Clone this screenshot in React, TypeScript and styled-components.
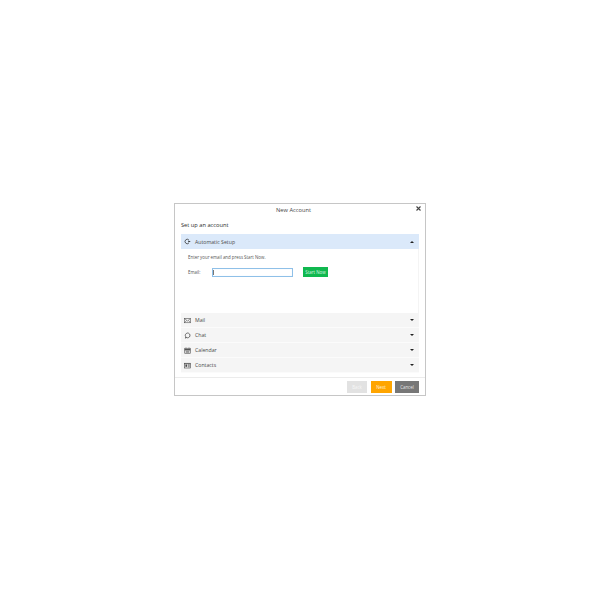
import * as React from "react";
import styled, { createGlobalStyle } from "styled-components";

const GlobalStyle = createGlobalStyle`
  html, body {
    margin: 0;
    padding: 0;
    background: #fff;
  }
  body {
    font-family: "Open Sans", "Liberation Sans", sans-serif;
    color: #333;
  }
`;

const Page = styled.div`
  width: 600px;
  height: 600px;
  box-sizing: border-box;
  padding: 203px 0 0 174px;
`;

const Dialog = styled.div`
  width: 252px;
  height: 193px;
  box-sizing: border-box;
  border: 1px solid #c6c6c6;
  background: #fff;
  display: flex;
  flex-direction: column;
`;

const TitleBar = styled.div`
  height: 11px;
  box-sizing: border-box;
  padding-right: 13px;
  position: relative;
  display: flex;
  align-items: center;
  justify-content: center;
  font-size: 5.7px;
  color: #444;
`;

const CloseIcon = styled.svg`
  position: absolute;
  top: 2px;
  right: 4px;
  width: 5px;
  height: 5px;
`;

const Body = styled.div`
  flex: 1;
  padding: 0 6px;
  display: flex;
  flex-direction: column;
`;

const Heading = styled.div`
  height: 19px;
  display: flex;
  align-items: center;
  font-size: 5.7px;
  font-weight: 500;
  color: #2b2b2b;
`;

const SectionHead = styled.div<{ $open?: boolean }>`
  height: 15px;
  box-sizing: border-box;
  display: flex;
  align-items: center;
  padding: 0 5px 0 3px;
  background: ${(p) => (p.$open ? "#dbe9fa" : "#f5f5f5")};
  border-bottom: ${(p) => (p.$open ? "none" : "1px solid #fbfbfb")};
  font-size: 5.2px;
  color: #4a4a4a;
`;

const SectionIcon = styled.svg`
  width: 7px;
  height: 7px;
  margin-right: 4px;
  flex: none;
`;

const SectionLabel = styled.span`
  flex: 1;
`;

const Caret = styled.span<{ $up?: boolean }>`
  width: 0;
  height: 0;
  border-left: 2px solid transparent;
  border-right: 2px solid transparent;
  ${(p) => (p.$up ? "border-bottom: 2px solid #222;" : "border-top: 2px solid #222;")}
`;

const SectionContent = styled.div`
  height: 64px;
  box-sizing: border-box;
  padding: 5px 7px;
  border-right: 1px solid #f4f4f4;
  font-size: 4.4px;
  color: #555;
`;

const FormRow = styled.div`
  display: flex;
  align-items: center;
  margin-top: 7px;
`;

const FieldLabel = styled.label`
  width: 24px;
`;

const EmailInput = styled.div`
  width: 81px;
  height: 9px;
  box-sizing: border-box;
  border: 1px solid #8fc0e8;
  box-shadow: inset 0 0 1px #d6e8f7;
  position: relative;
`;

const Cursor = styled.span`
  position: absolute;
  left: 0;
  top: 1px;
  width: 1px;
  height: 5px;
  background: #777;
`;

const StartButton = styled.button`
  margin-left: 10px;
  width: 25px;
  height: 10px;
  padding: 0;
  border: none;
  background: #10b84f;
  color: #d8f5e2;
  font-family: inherit;
  font-size: 4.4px;
`;

const Footer = styled.div`
  height: 18px;
  box-sizing: border-box;
  border-top: 1px solid #ececec;
  display: flex;
  justify-content: flex-end;
  align-items: flex-start;
  gap: 3.5px;
  padding: 3px 6px 0 0;
`;

const FooterButton = styled.button<{ $bg: string; $fg: string; $w: number }>`
  width: ${(p) => p.$w}px;
  height: 12px;
  padding: 0;
  border: none;
  background: ${(p) => p.$bg};
  color: ${(p) => p.$fg};
  font-family: inherit;
  font-size: 4.4px;
`;

const MailGlyph = () => (
  <SectionIcon viewBox="0 0 14 14" fill="none" stroke="#555" strokeWidth="1.2">
    <rect x="1" y="3" width="12" height="8.5" />
    <path d="M1 3l6 5 6-5M1 11.5l4-4.5M13 11.5l-4-4.5" />
  </SectionIcon>
);

const ChatGlyph = () => (
  <SectionIcon viewBox="0 0 14 14" fill="none" stroke="#333" strokeWidth="1.4">
    <path d="M7 2a5 4.8 0 1 1-2.6 8.9L3.2 12.5l.1-3.3A5 4.8 0 0 1 7 2z" />
  </SectionIcon>
);

const CalendarGlyph = () => (
  <SectionIcon viewBox="0 0 14 14" fill="none" stroke="#444" strokeWidth="1.2">
    <rect x="1.5" y="2.5" width="11" height="10" />
    <path d="M1.5 5.5h11" strokeWidth="2.6" />
    <path d="M4 1v2M10 1v2M3.5 8.5h7M3.5 10.5h7" />
  </SectionIcon>
);

const ContactsGlyph = () => (
  <SectionIcon viewBox="0 0 14 14" fill="none" stroke="#444" strokeWidth="1.2">
    <rect x="1" y="2.5" width="12" height="9.5" />
    <rect x="2.8" y="5" width="3.6" height="4.6" fill="#444" stroke="none" />
    <path d="M8 5.5h3.5M8 7.5h3.5M8 9.5h3.5M1 3.5h12" />
  </SectionIcon>
);

const SetupGlyph = () => (
  <SectionIcon viewBox="0 0 14 14" fill="none" stroke="#333" strokeWidth="1.5">
    <path d="M9.5 3.4A4.6 4.6 0 1 0 9.5 10.6" />
    <path d="M8.5 5l5 2-5 2z" fill="#333" stroke="none" />
  </SectionIcon>
);

const sections = [
  { label: "Mail", icon: <MailGlyph /> },
  { label: "Chat", icon: <ChatGlyph /> },
  { label: "Calendar", icon: <CalendarGlyph /> },
  { label: "Contacts", icon: <ContactsGlyph /> },
];

const App: React.FunctionComponent = () => (
  <Page>
    <GlobalStyle />
    <Dialog>
      <TitleBar>
        New Account
        <CloseIcon viewBox="0 0 10 10" stroke="#444" strokeWidth="2.2">
          <path d="M1 1l8 8M9 1l-8 8" />
        </CloseIcon>
      </TitleBar>
      <Body>
        <Heading>Set up an account</Heading>
        <SectionHead $open>
          <SetupGlyph />
          <SectionLabel>Automatic Setup</SectionLabel>
          <Caret $up />
        </SectionHead>
        <SectionContent>
          <div>Enter your email and press Start Now.</div>
          <FormRow>
            <FieldLabel>Email:</FieldLabel>
            <EmailInput>
              <Cursor />
            </EmailInput>
            <StartButton>Start Now</StartButton>
          </FormRow>
        </SectionContent>
        {sections.map((s) => (
          <SectionHead key={s.label}>
            {s.icon}
            <SectionLabel>{s.label}</SectionLabel>
            <Caret />
          </SectionHead>
        ))}
      </Body>
      <Footer>
        <FooterButton $bg="#e2e2e2" $fg="#f7f7f7" $w={20}>Back</FooterButton>
        <FooterButton $bg="#ffa500" $fg="#fff3dc" $w={21}>Next</FooterButton>
        <FooterButton $bg="#777777" $fg="#e6e6e6" $w={24}>Cancel</FooterButton>
      </Footer>
    </Dialog>
  </Page>
);

export default App;
